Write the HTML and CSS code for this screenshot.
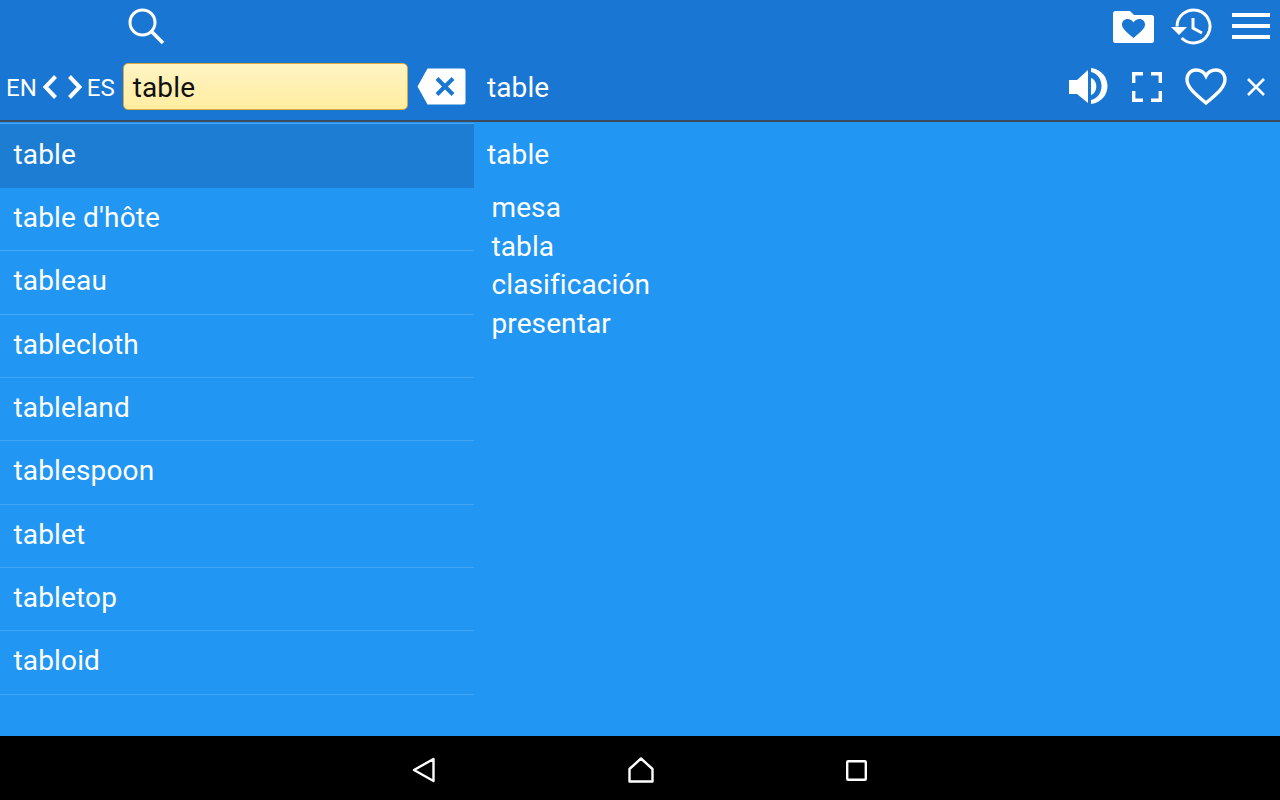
FILE: index.html
```html
<!DOCTYPE html>
<html lang="en">
<head>
<meta charset="utf-8">
<title>EN-ES Dictionary</title>
<link rel="stylesheet" href="styles.css">
</head>
<body>
<div class="app">
  <header class="header">
    <div class="row-top">
      <svg class="ic-search" width="38" height="38" viewBox="0 0 38 38"><circle cx="15.500" cy="14.500" r="12.500" fill="none" stroke="#fff" stroke-width="3"/><path d="M24.500 23.500 L36 35" stroke="#fff" stroke-width="3.600" fill="none"/></svg>
      <div class="spacer"></div>
      <svg class="ic-folder" width="41" height="32" viewBox="0 0 41 32"><path d="M2.500 0 H17 L21 4 H38.500 Q41 4 41 6.500 V29.500 Q41 32 38.500 32 H2.500 Q0 32 0 29.500 V2.500 Q0 0 2.500 0 Z" fill="#fff"/><path d="M20.500 27 C13 20.500 9 17.500 9 13.500 C9 10.300 11.500 8 14.500 8 C17 8 19.300 9.200 20.500 11.500 C21.700 9.200 24 8 26.500 8 C29.500 8 32 10.300 32 13.500 C32 17.500 28 20.500 20.500 27 Z" fill="#1976d2"/></svg>
      <svg class="ic-history" width="42" height="38" viewBox="0 0 42 38"><path d="M6 18.500 A16.500 16.500 0 1 1 10.700 30" fill="none" stroke="#fff" stroke-width="3"/><path d="M0 19 H16 L8 27 Z" fill="#fff"/><path d="M22 10 V20 L31 25" fill="none" stroke="#fff" stroke-width="3"/></svg>
      <div class="ic-menu"><span></span><span></span><span></span></div>
    </div>
    <div class="row-bottom">
      <div class="left-bar">
        <span class="lang lang-en">EN</span>
        <svg class="chev" width="16" height="26" viewBox="0 0 16 26"><path d="M13.500 2.500 L3.500 13 L13.500 23.500" fill="none" stroke="#fff" stroke-width="4"/></svg>
        <svg class="chev chev-r" width="16" height="26" viewBox="0 0 16 26"><path d="M2.500 2.500 L12.500 13 L2.500 23.500" fill="none" stroke="#fff" stroke-width="4"/></svg>
        <span class="lang lang-es">ES</span>
        <div class="input">table</div>
        <svg class="ic-back" width="49" height="37" viewBox="0 0 49 37"><path d="M10.500 0.500 H46 Q48.500 0.500 48.500 3 V34 Q48.500 36.500 46 36.500 H10.500 L0.500 18.500 Z" fill="#fff"/><path d="M20 10.500 L36 26.500 M36 10.500 L20 26.500" stroke="#1976d2" stroke-width="4" fill="none"/></svg>
      </div>
      <div class="word-title">table</div>
      <div class="spacer"></div>
      <svg class="ic-sound" width="39" height="37" viewBox="0 0 39 37"><path d="M0 12 H8 L19 2 V35 L8 26 H0 Z" fill="#fff"/><path d="M22 10 C29 12 29 25 22 27 Z" fill="#fff"/><path d="M22 0 C44 3 44 33 22 36 V32 C36 29 36 7 22 4 Z" fill="#fff"/></svg>
      <svg class="ic-full" width="30" height="30" viewBox="0 0 30 30"><path d="M1.700 11 V1.700 H11 M19 1.700 H28.300 V11 M28.300 19 V28.300 H19 M11 28.300 H1.700 V19" fill="none" stroke="#fff" stroke-width="3.400"/></svg>
      <svg class="ic-heart" width="42" height="38" viewBox="0 0 42 38"><path d="M21 35 C9 25 2 19 2 11.500 C2 6 6 2 11 2 C15 2 19 4 21 8 C23 4 27 2 31 2 C36 2 40 6 40 11.500 C40 19 33 25 21 35 Z" fill="none" stroke="#fff" stroke-width="3.400"/></svg>
      <svg class="ic-close" width="18" height="18" viewBox="0 0 18 18"><path d="M1 1 L17 17 M17 1 L1 17" stroke="#fff" stroke-width="2.600" fill="none"/></svg>
    </div>
  </header>
  <main class="content">
    <ul class="list">
      <li class="item active">table</li>
      <li class="item">table d'hôte</li>
      <li class="item">tableau</li>
      <li class="item">tablecloth</li>
      <li class="item">tableland</li>
      <li class="item">tablespoon</li>
      <li class="item">tablet</li>
      <li class="item">tabletop</li>
      <li class="item">tabloid</li>
    </ul>
    <section class="detail">
      <div class="headword">table</div>
      <div class="translations">
        <div>mesa</div>
        <div>tabla</div>
        <div>clasificación</div>
        <div>presentar</div>
      </div>
    </section>
  </main>
  <nav class="navbar">
    <svg class="nav-back" width="24" height="26" viewBox="0 0 24 26"><path d="M2 13 L21.500 2 V24 Z" fill="none" stroke="#fff" stroke-width="2.400" stroke-linejoin="round"/></svg>
    <svg class="nav-home" width="26" height="26" viewBox="0 0 26 26"><path d="M1.500 24.500 V12 L13 1.500 L24.500 12 V24.500 Z" fill="none" stroke="#fff" stroke-width="2.400" stroke-linejoin="round"/></svg>
    <svg class="nav-recent" width="21" height="21" viewBox="0 0 21 21"><rect x="1.200" y="1.200" width="18.600" height="18.600" fill="none" stroke="#fff" stroke-width="2.400" rx="1"/></svg>
  </nav>
</div>
</body>
</html>
```
FILE: styles.css
```css
* { box-sizing: border-box; }
html, body { margin: 0; padding: 0; }
body { width: 1280px; height: 800px; overflow: hidden; font-family: Roboto, "Liberation Sans", sans-serif; color: #fff; }
.app { display: flex; flex-direction: column; width: 1280px; height: 800px; background: #2196f3; }
.header { height: 122px; flex: none; background: #1976d2; border-bottom: 2px solid #3c4b5c; display: flex; flex-direction: column; }
.row-top { height: 53px; display: flex; align-items: flex-start; padding: 8px 10px 0 127px; }
.row-bottom { height: 67px; display: flex; align-items: center; }
.spacer { flex: 1; }
.ic-search { display: block; }
.ic-folder { display: block; margin-top: 3px; }
.ic-history { display: block; margin: 0 0 0 17px; }
.ic-menu { width: 38px; margin: 5px 0 0 19px; display: flex; flex-direction: column; gap: 7px; }
.ic-menu span { display: block; height: 4px; background: #fff; }
.left-bar { width: 474px; display: flex; align-items: center; flex: none; }
.lang { font-size: 24px; line-height: 28px; padding-top: 2px; }
.lang-en { margin-left: 6px; }
.chev { display: block; margin-left: 5px; }
.chev-r { margin-left: 9px; }
.lang-es { margin-left: 4px; }
.input { width: 285px; height: 47px; margin-left: 8px; background: linear-gradient(#fff4c4, #ffeda0); border: 1px solid #e0a83c; border-radius: 5px; color: #111; font-size: 28px; letter-spacing: 0.15px; line-height: 47px; padding-left: 9px; }
.ic-back { display: block; margin-left: 9px; }
.word-title { margin-left: 13px; padding-top: 1px; font-size: 28px; letter-spacing: 0.1px; }
.ic-sound { display: block; }
.ic-full { display: block; margin-left: 24px; }
.ic-heart { display: block; margin-left: 23px; }
.ic-close { display: block; margin: 0 15px 0 20px; }
.content { flex: 1; display: flex; min-height: 0; padding-top: 1px; }
.list { list-style: none; margin: 0; padding: 0; width: 474px; flex: none; }
.item { height: 63.35px; border-bottom: 1px solid #42a5f5; font-size: 28px; letter-spacing: 0.15px; line-height: 60px; padding-left: 13.500px; }
.item.active { height: 64.900px; background: #1c7dd3; border-top: 1px solid #42a5f5; border-bottom-color: #1c7dd3; line-height: 62px; }
.detail { flex: 1; padding: 1px 0 0 13px; }
.headword { font-size: 28px; letter-spacing: 0.1px; line-height: 62px; }
.translations { margin: 3px 0 0 4.500px; font-size: 28px; letter-spacing: 0.1px; line-height: 38.700px; }
.navbar { height: 64px; flex: none; background: #000; display: flex; align-items: center; padding: 4px 0 0 412px; }
.nav-back { display: block; }
.nav-home { display: block; margin-left: 192px; }
.nav-recent { display: block; margin-left: 192px; }
```
